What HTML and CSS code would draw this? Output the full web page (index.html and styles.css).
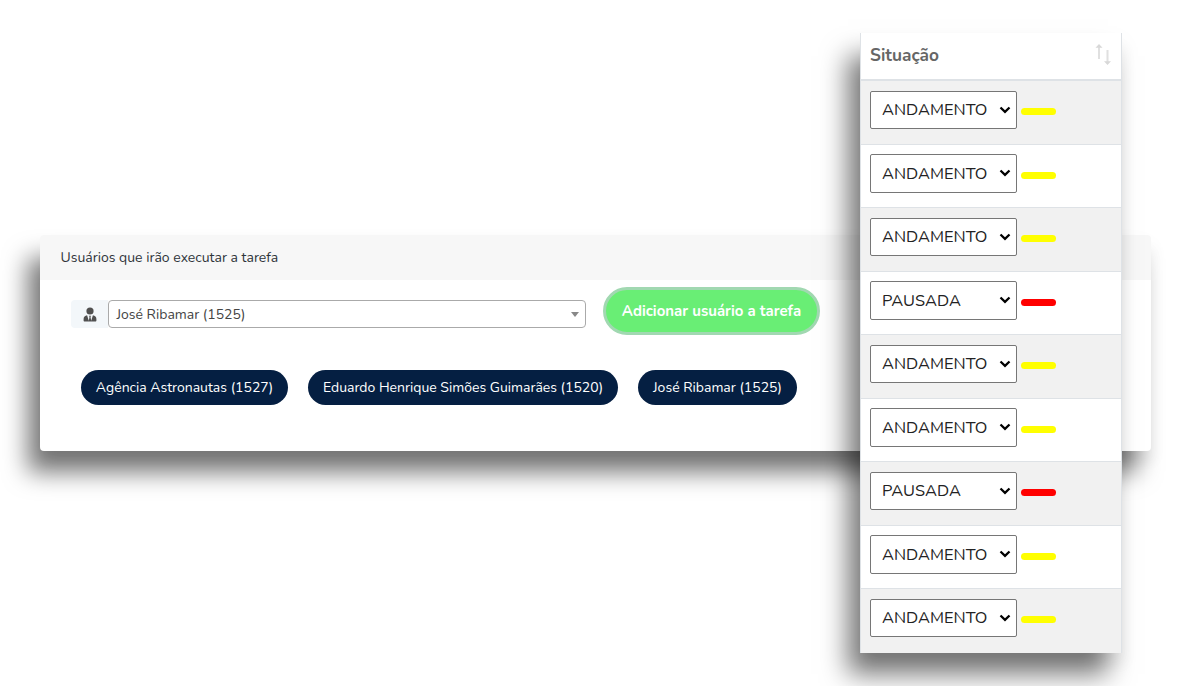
FILE: index.html
```html
<!DOCTYPE html>
<html lang="pt-BR">
<head>
<meta charset="utf-8">
<title>Tarefas</title>
<link rel="stylesheet" href="styles.css">
</head>
<body>
<main class="stage">
  <section class="card">
    <header class="card-header"><span>Usuários que irão executar a tarefa</span></header>
    <div class="form-row">
      <span class="addon"><svg class="user" viewBox="0 0 14 15"><circle cx="7" cy="4" r="3.6"/><path d="M4.1 8.3 5.8 13.8 6.5 10 6 8.8h2L7.500 10l.7 3.800L9.900 8.300C12 8.500 13.400 10 13.400 12v1.400c0 .7-.4 1.100-1.100 1.100H1.700c-.7 0-1.100-.4-1.100-1.100V12C.6 10 2 8.500 4.100 8.300Z"/></svg></span>
      <div class="combo"><span>José Ribamar (1525)</span><i class="caret"></i></div>
      <button class="add"><span>Adicionar usuário a tarefa</span></button>
    </div>
    <div class="chips">
      <span class="chip c1">Agência Astronautas (1527)</span>
      <span class="chip c2">Eduardo Henrique Simões Guimarães (1520)</span>
      <span class="chip c3">José Ribamar (1525)</span>
    </div>
  </section>
  <section class="table">
    <header class="th"><span>Situação</span><svg class="sort" viewBox="0 0 18 22"><path class="stem" d="M5 16V3M13.500 7v13"/><path class="head" d="M1.500 4.800 5 1l3.500 3.800ZM10 18.200l3.500 3.800 3.500-3.800Z"/></svg></header>
    <div class="row"><div class="select"><span>ANDAMENTO</span><svg viewBox="0 0 12 8"><path d="m1.500 1.500 4.500 4.300 4.500-4.300"/></svg></div><i class="mark"></i></div>
    <div class="row"><div class="select"><span>ANDAMENTO</span><svg viewBox="0 0 12 8"><path d="m1.500 1.500 4.500 4.300 4.500-4.300"/></svg></div><i class="mark"></i></div>
    <div class="row"><div class="select"><span>ANDAMENTO</span><svg viewBox="0 0 12 8"><path d="m1.500 1.500 4.500 4.300 4.500-4.300"/></svg></div><i class="mark"></i></div>
    <div class="row"><div class="select"><span>PAUSADA</span><svg viewBox="0 0 12 8"><path d="m1.500 1.500 4.500 4.300 4.500-4.300"/></svg></div><i class="mark red"></i></div>
    <div class="row"><div class="select"><span>ANDAMENTO</span><svg viewBox="0 0 12 8"><path d="m1.500 1.500 4.500 4.300 4.500-4.300"/></svg></div><i class="mark"></i></div>
    <div class="row"><div class="select"><span>ANDAMENTO</span><svg viewBox="0 0 12 8"><path d="m1.500 1.500 4.500 4.300 4.500-4.300"/></svg></div><i class="mark"></i></div>
    <div class="row"><div class="select"><span>PAUSADA</span><svg viewBox="0 0 12 8"><path d="m1.500 1.500 4.500 4.300 4.500-4.300"/></svg></div><i class="mark red"></i></div>
    <div class="row"><div class="select"><span>ANDAMENTO</span><svg viewBox="0 0 12 8"><path d="m1.500 1.500 4.500 4.300 4.500-4.300"/></svg></div><i class="mark"></i></div>
    <div class="row"><div class="select"><span>ANDAMENTO</span><svg viewBox="0 0 12 8"><path d="m1.500 1.500 4.500 4.300 4.500-4.300"/></svg></div><i class="mark"></i></div>
  </section>
</main>
</body>
</html>
```
FILE: styles.css
```css
* { box-sizing: border-box; }
body { margin: 0; background: #fff; font-family: Nunito, Lato, sans-serif; }
.stage { position: relative; width: 1190px; height: 686px; overflow: hidden; padding: 235px 0 0 40px; }
.card { width: 1111px; height: 216px; background: #fff; border-radius: 4px; box-shadow: -13px 22px 25px -1px rgba(0,0,0,.54), 5px 12px 12px rgba(0,0,0,.03); }
.card-header { height: 45px; display: flex; align-items: center; padding-left: 20.5px; background: #f7f7f7; border-radius: 4px 4px 0 0; font-size: 14px; color: #2f353a; }
.card span { white-space: nowrap; }
.form-row { display: flex; align-items: flex-start; height: 90px; padding: 7px 0 0 31px; }
.addon { width: 37px; height: 28px; margin-top: 13px; display: flex; align-items: center; justify-content: center; background: #f3f7fa; border-radius: 4px 0 0 4px; }
.user { width: 14px; height: 15px; fill: #505050; }
.combo { width: 478px; height: 28px; margin-top: 13px; padding: 0 6px 0 7.5px; border: 1px solid #aaa; border-radius: 4px; display: flex; align-items: center; justify-content: space-between; font-size: 14px; color: #444; }
.caret { border: 4px solid transparent; border-top: 5px solid #888; border-bottom: 0; }
.add { width: 217px; height: 48px; margin-left: 17px; padding: 0; border: 3px solid #a1d8b1; border-radius: 24px; background: #69ee75; color: #fff; font: 700 15px Nunito, Lato, sans-serif; }
.chips { display: flex; gap: 20px; padding-left: 41px; }
.chip { height: 35px; display: flex; align-items: center; justify-content: center; border-radius: 18px; background: #051f42; color: #fff; font-size: 14px; }
.c1 { width: 207px; }
.c2 { width: 310px; }
.c3 { width: 159px; }
.table { position: absolute; left: 860px; top: 33px; width: 262px; height: 620px; background: #fff; border: solid #dee2e6; border-width: 0 1px 1px; box-shadow: -13px 22px 25px -1px rgba(0,0,0,.54), 5px 12px 12px rgba(0,0,0,.03); }
.th { height: 48px; display: flex; align-items: flex-start; justify-content: space-between; padding: 11px 9px 0 9px; border-bottom: 2px solid #dee2e6; color: #666; font-size: 17.3px; line-height: 24px; font-weight: 700; }
.sort { width: 18px; height: 22px; margin-top: -1px; }
.stem { fill: none; stroke: #e0e0e0; stroke-width: 2; }
.head { fill: #d8d8d8; }
.row { height: 63.5px; display: flex; align-items: flex-start; padding: 9.5px 0 0 9px; border-bottom: 1px solid #dee2e6; }
.row:nth-child(even) { background: #f1f1f1; }
.row:last-child { border-bottom: 0; }
.select { width: 147px; height: 38.5px; display: flex; align-items: center; justify-content: space-between; padding: 0 5px 0 11px; border: 1px solid #767676; border-radius: 2px; background: #fff; color: #222; font-size: 16.4px; }
.select svg { width: 12px; height: 8px; fill: none; stroke: #000; stroke-width: 2.3; }
.mark { width: 35px; height: 7px; margin: 17.5px 0 0 4px; border-radius: 4px; background: #ff0; }
.mark.red { background: #f00; }
```
